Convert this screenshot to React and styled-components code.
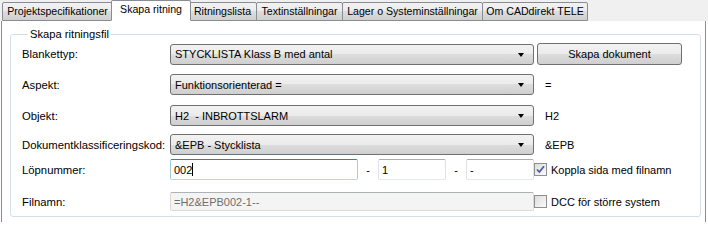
import React from 'react';
import styled, { createGlobalStyle } from 'styled-components';

const Global = createGlobalStyle`
  body {
    margin: 0;
    background: #fff;
    font-family: 'Liberation Sans', Arial, sans-serif;
    font-size: 11px;
    color: #000;
  }
`;

const Window = styled.div`
  width: 708px;
  height: 222px;
  overflow: hidden;
  background: #fff;
`;

const TabStrip = styled.div`
  display: flex;
  align-items: flex-end;
  height: 21px;
  padding-left: 2px;
  position: relative;
  z-index: 1;
  background: #f0f0f0;
`;

const Tab = styled.div`
  display: flex;
  align-items: center;
  justify-content: center;
  box-sizing: border-box;
  width: ${p => p.$w}px;
  height: ${p => (p.$active ? 21 : 19)}px;
  margin-right: ${p => (p.$active ? -2 : 0)}px;
  margin-left: ${p => (p.$active ? -2 : -1)}px;
  padding-bottom: ${p => (p.$active ? 3 : 1)}px;
  border: 1px solid #898c95;
  border-bottom: ${p => (p.$active ? '1px solid #fff' : '1px solid #898c95')};
  border-radius: 2px 2px 0 0;
  background: ${p =>
    p.$active ? '#fff' : 'linear-gradient(#f2f2f2 0%, #ebebeb 50%, #dddddd 50%, #cfcfcf 100%)'};
  z-index: ${p => (p.$active ? 2 : 1)};
  font-size: 10.6px;
  white-space: nowrap;
  &:first-child { margin-left: 0; }
`;

const Panel = styled.div`
  box-sizing: border-box;
  width: 705px;
  height: 240px;
  margin-left: 1px;
  margin-top: -1px;
  border: 1px solid #898c95;
  border-bottom: none;
  background: #fff;
  padding: 7px 4px 0 8px;
`;

const Group = styled.fieldset`
  margin: 0;
  padding: 2px 0 5px 11px;
  border: 1px solid #d5dfe5;
  border-radius: 3px;
  min-width: 0;
`;

const Legend = styled.legend`
  margin-left: 6px;
  padding: 0 2px;
  line-height: 13px;
  font-size: 11.2px;
`;

const Row = styled.div`
  display: grid;
  grid-template-columns: 148px 364px 1fr;
  align-items: center;
  margin-top: ${p => p.$gap || 0}px;
  height: ${p => p.$h || 21}px;
`;

const Label = styled.span`
  font-size: 11.3px;
  white-space: nowrap;
`;

const Side = styled.span`
  padding-left: ${p => p.$pad || 0}px;
  white-space: nowrap;
  display: flex;
  align-items: center;
`;

const Combo = styled.div`
  position: relative;
  box-sizing: border-box;
  height: 21px;
  display: flex;
  align-items: center;
  padding-left: 4px;
  border: 1px solid #707070;
  border-radius: 3px;
  background: linear-gradient(#f2f2f2 0%, #ebebeb 50%, #dddddd 50%, #cfcfcf 100%);
  white-space: nowrap;
`;

const Arrow = styled.span`
  position: absolute;
  right: 9px;
  top: 8px;
  width: 0;
  height: 0;
  border-left: 3.5px solid transparent;
  border-right: 3.5px solid transparent;
  border-top: 4px solid #000;
`;

const Button = styled.div`
  box-sizing: border-box;
  margin-left: 3px;
  width: 145px;
  height: 22px;
  display: flex;
  align-items: center;
  justify-content: center;
  border: 1px solid #707070;
  border-radius: 3px;
  background: linear-gradient(#f2f2f2 0%, #ebebeb 50%, #dddddd 50%, #cfcfcf 100%);
`;

const Field = styled.div`
  box-sizing: border-box;
  width: ${p => (p.$w ? `${p.$w}px` : 'auto')};
  height: ${p => p.$h || 21}px;
  display: flex;
  align-items: center;
  padding-left: 3px;
  border: 1px solid;
  border-color: ${p =>
    p.$focus ? '#3d7bad #a4c9e3 #b7d9ed #a4c9e3' : p.$disabled ? '#adb2b5 #dadada #dadada #dadada' : '#abadb3 #e2e3ea #e3e9ef #e2e3ea'};
  border-radius: 2px;
  background: ${p => (p.$disabled ? '#f4f4f4' : '#fff')};
  color: ${p => (p.$disabled ? '#6d6d6d' : '#000')};
  white-space: nowrap;
`;

const Caret = styled.span`
  display: inline-block;
  width: 1px;
  height: 13px;
  background: #000;
`;

const Parts = styled.div`
  display: flex;
  align-items: center;
`;

const Dash = styled.span`
  width: 20px;
  text-align: center;
`;

const Box = styled.span`
  box-sizing: border-box;
  width: 13px;
  height: 13px;
  margin-right: 4px;
  border: 1px solid #8f8f8f;
  background: linear-gradient(135deg, #dcdcdc, #fbfbfb);
  display: flex;
  align-items: center;
  justify-content: center;
`;

const Check = ({ checked, children }) => (
  <Side $pad={0}>
    <Box>
      {checked && (
        <svg width="9" height="9" viewBox="0 0 9 9">
          <path d="M1 4.5 L3.4 7 L8 1.2" fill="none" stroke="#4a5f97" strokeWidth="1.8" />
        </svg>
      )}
    </Box>
    {children}
  </Side>
);

const tabs = [
  ['Projektspecifikationer', 111],
  ['Skapa ritning', 80],
  ['Ritningslista', 69],
  ['Textinställningar', 87],
  ['Lager o Systeminställningar', 141],
  ['Om CADdirekt TELE', 106],
];

const App = () => (
  <Window>
    <Global />
    <TabStrip>
      {tabs.map(([name, w], i) => (
        <Tab key={name} $w={w} $active={i === 1}>{name}</Tab>
      ))}
    </TabStrip>
    <Panel>
      <Group>
        <Legend>Skapa ritningsfil</Legend>
        <Row $gap={0} $h={22}>
          <Label>Blankettyp:</Label>
          <Combo>STYCKLISTA Klass B med antal<Arrow /></Combo>
          <Button>Skapa dokument</Button>
        </Row>
        <Row $gap={9}>
          <Label>Aspekt:</Label>
          <Combo>Funktionsorienterad =<Arrow /></Combo>
          <Side $pad={11}>=</Side>
        </Row>
        <Row $gap={10}>
          <Label>Objekt:</Label>
          <Combo>H2&nbsp; - INBROTTSLARM<Arrow /></Combo>
          <Side $pad={11}>H2</Side>
        </Row>
        <Row $gap={8}>
          <Label>Dokumentklassificeringskod:</Label>
          <Combo>&amp;EPB - Stycklista<Arrow /></Combo>
          <Side $pad={11}>&amp;EPB</Side>
        </Row>
        <Row $gap={4}>
          <Label>Löpnummer:</Label>
          <Parts>
            <Field $w={188} $focus>002<Caret /></Field>
            <Dash>-</Dash>
            <Field $w={68}>1</Field>
            <Dash>-</Dash>
            <Field $w={68}>-</Field>
          </Parts>
          <Check checked>Koppla sida med filnamn</Check>
        </Row>
        <Row $gap={12} $h={19}>
          <Label>Filnamn:</Label>
          <Field $h={19} $disabled>=H2&amp;EPB002-1--</Field>
          <Check>DCC för större system</Check>
        </Row>
      </Group>
    </Panel>
  </Window>
);

export default App;
